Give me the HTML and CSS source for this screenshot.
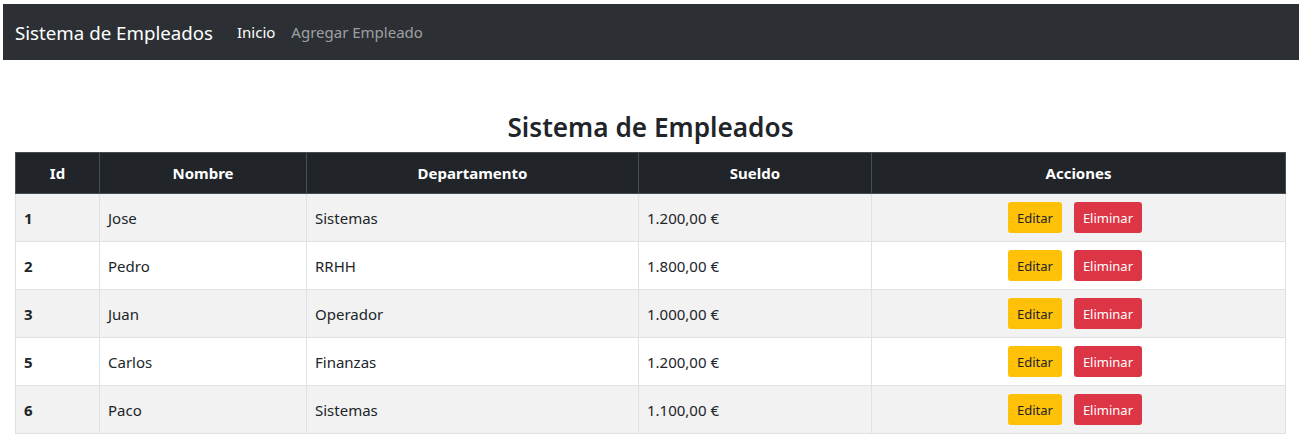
FILE: index.html
```html
<!DOCTYPE html>
<html lang="es">
<head>
<meta charset="utf-8">
<title>Sistema de Empleados</title>
<link rel="stylesheet" href="styles.css">
</head>
<body>
<nav class="navbar">
  <a class="brand" href="#">Sistema de Empleados</a>
  <ul class="nav">
    <li><a class="nav-link active" href="#">Inicio</a></li>
    <li><a class="nav-link" href="#">Agregar Empleado</a></li>
  </ul>
</nav>
<main class="container">
  <h3 class="title">Sistema de Empleados</h3>
  <table class="table">
    <thead>
      <tr>
        <th class="c-id">Id</th>
        <th class="c-name">Nombre</th>
        <th class="c-dep">Departamento</th>
        <th class="c-sal">Sueldo</th>
        <th>Acciones</th>
      </tr>
    </thead>
    <tbody>
      <tr><td class="id">1</td><td>Jose</td><td>Sistemas</td><td>1.200,00 €</td><td class="actions"><button class="btn btn-warning">Editar</button><button class="btn btn-danger">Eliminar</button></td></tr>
      <tr><td class="id">2</td><td>Pedro</td><td>RRHH</td><td>1.800,00 €</td><td class="actions"><button class="btn btn-warning">Editar</button><button class="btn btn-danger">Eliminar</button></td></tr>
      <tr><td class="id">3</td><td>Juan</td><td>Operador</td><td>1.000,00 €</td><td class="actions"><button class="btn btn-warning">Editar</button><button class="btn btn-danger">Eliminar</button></td></tr>
      <tr><td class="id">5</td><td>Carlos</td><td>Finanzas</td><td>1.200,00 €</td><td class="actions"><button class="btn btn-warning">Editar</button><button class="btn btn-danger">Eliminar</button></td></tr>
      <tr><td class="id">6</td><td>Paco</td><td>Sistemas</td><td>1.100,00 €</td><td class="actions"><button class="btn btn-warning">Editar</button><button class="btn btn-danger">Eliminar</button></td></tr>
    </tbody>
  </table>
</main>
</body>
</html>
```
FILE: styles.css
```css
* { box-sizing: border-box; }
body {
  margin: 4px 7px 0 3px;
  font-family: "Noto Sans", "Open Sans", sans-serif;
  font-size: 15px;
  color: #212529;
  background: #fff;
}
.navbar {
  display: flex;
  align-items: center;
  height: 56px;
  padding: 0 12px;
  background: #2c3035;
}
.brand {
  color: #fff;
  font-size: 18.7px;
  text-decoration: none;
  margin-right: 24px;
}
.nav {
  display: flex;
  list-style: none;
  margin: 0;
  padding: 0;
  gap: 16px;
}
.nav-link {
  color: rgba(255,255,255,.55);
  text-decoration: none;
  font-size: 15px;
}
.nav-link.active { color: #fff; }
.container {
  padding: 50px 13px 0 12px;
}
.title {
  text-align: center;
  font-size: 26.2px;
  font-weight: 600;
  margin: 0 0 8px;
  line-height: 34px;
}
.table {
  width: 100%;
  border-collapse: collapse;
  font-size: 15px;
}
.table th, .table td {
  padding: 8px 8px;
  border: 1px solid #dee2e6;
  text-align: left;
  vertical-align: middle;
}
.table thead th {
  background: #212529;
  color: #fff;
  font-weight: 700;
  text-align: center;
  border-color: #454d55;
  height: 41px;
}
.c-id { width: 84px; }
.c-name { width: 207px; }
.c-dep { width: 332px; }
.c-sal { width: 233px; }
.table td { height: 48px; }
.table tbody tr:nth-child(odd) { background: #f2f2f2; }
.table td.id { font-weight: 700; }
.table td.actions { text-align: center; padding-right: 15px; }
.btn {
  font-family: inherit;
  font-size: 13px;
  border: none;
  border-radius: 3px;
  height: 31px;
  padding: 0 9px;
  cursor: pointer;
  vertical-align: middle;
}
.btn + .btn { margin-left: 12px; }
.btn-warning { background: #ffc107; color: #212529; }
.btn-danger { background: #dc3545; color: #fff; }
```
